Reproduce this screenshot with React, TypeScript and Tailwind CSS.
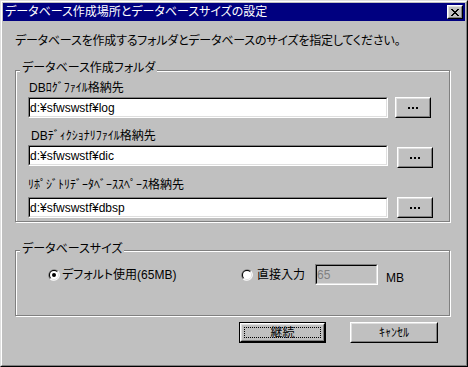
const font = "font-['Liberation_Sans','Noto_Sans_CJK_JP',sans-serif] [font-feature-settings:'palt']";
const half = "[font-feature-settings:normal]";

const X_ROWS = ["11000011", "01100110", "00111100", "00011000", "00111100", "01100110", "11000011"];

function CloseGlyph() {
  return (
    <svg width="8" height="7" viewBox="0 0 8 7" shapeRendering="crispEdges">
      {X_ROWS.flatMap((row, y) =>
        row.split("").map((c, x) => (c === "1" ? <rect key={`${x}-${y}`} x={x} y={y} width="1" height="1" fill="#000" /> : null))
      )}
    </svg>
  );
}

function Dots() {
  return (
    <svg width="10" height="2" viewBox="0 0 10 2" shapeRendering="crispEdges">
      <rect x="0" y="0" width="2" height="2" fill="#000" />
      <rect x="4" y="0" width="2" height="2" fill="#000" />
      <rect x="8" y="0" width="2" height="2" fill="#000" />
    </svg>
  );
}

function Radio({ checked }: { checked: boolean }) {
  return (
    <svg width="12" height="12" viewBox="0 0 12 12" className="shrink-0">
      <path d="M1.76 10.24A6 6 0 0 1 10.24 1.76Z" fill="#808080" />
      <path d="M10.24 1.76A6 6 0 0 1 1.76 10.24Z" fill="#ffffff" />
      <path d="M2.46 9.54A5 5 0 0 1 9.54 2.46Z" fill="#000000" />
      <path d="M9.54 2.46A5 5 0 0 1 2.46 9.54Z" fill="#dfdfdf" />
      <circle cx="6" cy="6" r="4" fill="#ffffff" />
      {checked && <circle cx="6" cy="6" r="2" fill="#000000" />}
    </svg>
  );
}

function Raised({ className = "", children }: { className?: string; children?: React.ReactNode }) {
  return (
    <div className={`border border-t-white border-l-white border-r-black border-b-black ${className}`}>
      <div className="h-full border border-t-[#dfdfdf] border-l-[#dfdfdf] border-r-[#808080] border-b-[#808080] flex items-center justify-center">
        {children}
      </div>
    </div>
  );
}

function Sunken({ className = "", inner = "bg-white", children }: { className?: string; inner?: string; children?: React.ReactNode }) {
  return (
    <div className={`border border-t-[#808080] border-l-[#808080] border-r-white border-b-white ${className}`}>
      <div className={`h-full border border-t-black border-l-black border-r-[#dfdfdf] border-b-[#dfdfdf] flex items-center ${inner}`}>
        {children}
      </div>
    </div>
  );
}

function GroupLabel({ text, top }: { text: string; top: string }) {
  return <span className={`absolute left-[4px] ${top} px-[2px] bg-[#c0c0c0] leading-[16px]`}>{text}</span>;
}

export default function App() {
  return (
    <div className={`${font} text-[12px] text-black w-[468px] h-[367px] bg-[#c0c0c0] border border-t-[#dfdfdf] border-l-[#dfdfdf] border-r-black border-b-black`}>
      <div className="h-full border border-t-white border-l-white border-r-[#808080] border-b-[#808080] p-px flex flex-col">
        {/* title bar */}
        <div className="h-[18px] shrink-0 bg-[#000080] flex items-center justify-between pl-[2px] pr-[2px]">
          <span className="text-white leading-[16px]">データベース作成場所とデータベースサイズの設定</span>
          <Raised className="w-[16px] h-[14px] bg-[#c0c0c0]">
            <CloseGlyph />
          </Raised>
        </div>

        <div className="pl-[12px] flex flex-col">
          <p className="mt-[12px] leading-[16px] tracking-[-0.2px]">データベースを作成するフォルダとデータベースのサイズを指定してください。</p>

          {/* folders */}
          <div className="relative mt-[21px] w-[435px] h-[152px] shrink-0 border border-[#808080] shadow-[inset_1px_1px_0_#fff,1px_1px_0_#fff] pl-[12px] pt-[9px] flex flex-col">
            <GroupLabel text="データベース作成フォルダ" top="top-[-11px]" />

            <span className={`pl-[1px] leading-[16px] ${half}`}>DBﾛｸﾞﾌｧｲﾙ格納先</span>
            <div className="mt-[1px] flex items-start">
              <Sunken className="w-[360px] h-[21px]">d:¥sfwswstf¥log</Sunken>
              <Raised className="ml-[7px] w-[36px] h-[21px]">
                <Dots />
              </Raised>
            </div>

            <span className={`mt-[10px] pl-[3px] leading-[16px] ${half}`}>DBﾃﾞｨｸｼｮﾅﾘﾌｧｲﾙ格納先</span>
            <div className="mt-[1px] flex items-start">
              <Sunken className="w-[360px] h-[21px]">d:¥sfwswstf¥dic</Sunken>
              <Raised className="ml-[9px] mt-[2px] w-[36px] h-[21px]">
                <Dots />
              </Raised>
            </div>

            <span className={`mt-[9px] leading-[16px] ${half}`}>ﾘﾎﾟｼﾞﾄﾘﾃﾞｰﾀﾍﾞｰｽｽﾍﾟｰｽ格納先</span>
            <div className="mt-[4px] flex items-start">
              <Sunken className="w-[360px] h-[21px]">d:¥sfwswstf¥dbsp</Sunken>
              <Raised className="ml-[9px] w-[36px] h-[21px]">
                <Dots />
              </Raised>
            </div>
          </div>

          {/* size */}
          <div className="relative mt-[28px] w-[435px] h-[66px] shrink-0 border border-[#808080] shadow-[inset_1px_1px_0_#fff,1px_1px_0_#fff] pl-[32px] pt-[13px]">
            <GroupLabel text="データベースサイズ" top="top-[-10px]" />
            <div className="h-[21px] flex items-center">
              <div className="w-[193px] flex items-center">
                <Radio checked />
                <span className="ml-[2px] leading-[16px]">デフォルト使用(65MB)</span>
              </div>
              <Radio checked={false} />
              <span className="ml-[4px] w-[58px] leading-[16px]">直接入力</span>
              <Sunken className="w-[63px] h-[21px]" inner="bg-[#c0c0c0]">
                <span className="text-[#808080]">65</span>
              </Sunken>
              <span className="ml-[8px] mt-[6px] leading-[16px]">MB</span>
            </div>
          </div>

          {/* buttons */}
          <div className="mt-[6px] w-[435px] flex justify-end pr-[12px] gap-[24px]">
            <div className="w-[87px] h-[21px] border border-black">
              <div className="h-full border border-t-white border-l-white border-r-black border-b-black">
                <div className="h-full border border-t-[#dfdfdf] border-l-[#dfdfdf] border-r-[#808080] border-b-[#808080] p-[2px]">
                  <div className="h-full border border-dotted border-black flex items-center justify-center leading-[14px]">継続</div>
                </div>
              </div>
            </div>
            <Raised className="w-[88px] h-[21px]">
              <span className={`leading-[16px] ${half}`}>ｷｬﾝｾﾙ</span>
            </Raised>
          </div>
        </div>
      </div>
    </div>
  );
}
